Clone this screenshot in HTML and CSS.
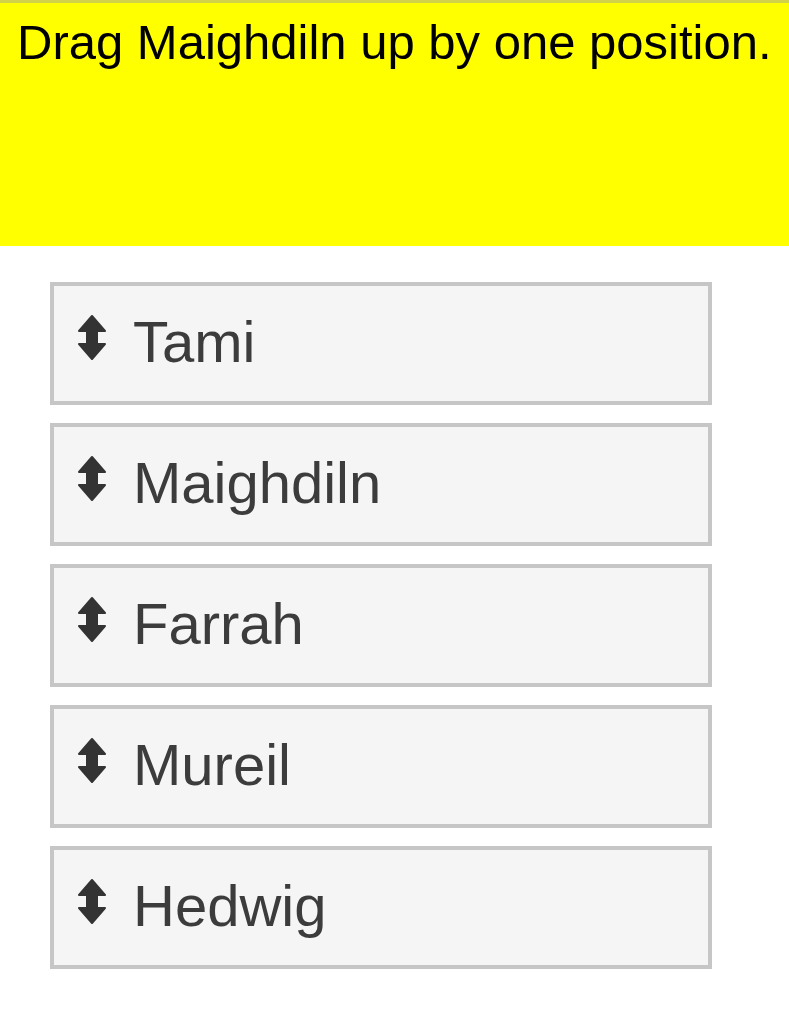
FILE: index.html
```html
<!DOCTYPE html>
<html>
<head>
<meta charset="utf-8">
<link rel="stylesheet" href="styles.css">
</head>
<body>
<div class="prompt">Drag Maighdiln up by one position.</div>
<ul class="list">
  <li class="item"><svg class="handle" viewBox="0 0 28 45"><path d="M14 1 L27 16 L19 16 L19 29 L27 29 L14 44 L1 29 L9 29 L9 16 L1 16 Z"/></svg><span class="name">Tami</span></li>
  <li class="item"><svg class="handle" viewBox="0 0 28 45"><path d="M14 1 L27 16 L19 16 L19 29 L27 29 L14 44 L1 29 L9 29 L9 16 L1 16 Z"/></svg><span class="name">Maighdiln</span></li>
  <li class="item"><svg class="handle" viewBox="0 0 28 45"><path d="M14 1 L27 16 L19 16 L19 29 L27 29 L14 44 L1 29 L9 29 L9 16 L1 16 Z"/></svg><span class="name">Farrah</span></li>
  <li class="item"><svg class="handle" viewBox="0 0 28 45"><path d="M14 1 L27 16 L19 16 L19 29 L27 29 L14 44 L1 29 L9 29 L9 16 L1 16 Z"/></svg><span class="name">Mureil</span></li>
  <li class="item"><svg class="handle" viewBox="0 0 28 45"><path d="M14 1 L27 16 L19 16 L19 29 L27 29 L14 44 L1 29 L9 29 L9 16 L1 16 Z"/></svg><span class="name">Hedwig</span></li>
</ul>
</body>
</html>
```
FILE: styles.css
```css
html, body {
  margin: 0;
  padding: 0;
  background: #ffffff;
  font-family: "Liberation Sans", Arial, sans-serif;
}
.prompt {
  box-sizing: border-box;
  height: 246px;
  background: #ffff00;
  border-top: 3px solid #d2d24a;
  padding: 11px 0 0 17px;
  font-size: 49px;
  line-height: 56px;
  color: #000;
  white-space: nowrap;
}
.list {
  list-style: none;
  margin: 36px 0 0 50px;
  padding: 0;
  width: 662px;
  display: flex;
  flex-direction: column;
  gap: 18px;
}
.item {
  box-sizing: border-box;
  height: 123px;
  display: flex;
  align-items: flex-start;
  gap: 27px;
  padding: 23px 0 0 24px;
  background: #f5f5f5;
  border: 4px solid #c6c6c6;
}
.handle {
  width: 28px;
  height: 45px;
  margin-top: 6px;
  flex: none;
  fill: #333333;
  stroke: #333333;
  stroke-width: 2;
  stroke-linejoin: round;
  filter: blur(0.6px);
}
.name {
  font-size: 58px;
  line-height: 66px;
  color: #3c3c3c;
}
```
